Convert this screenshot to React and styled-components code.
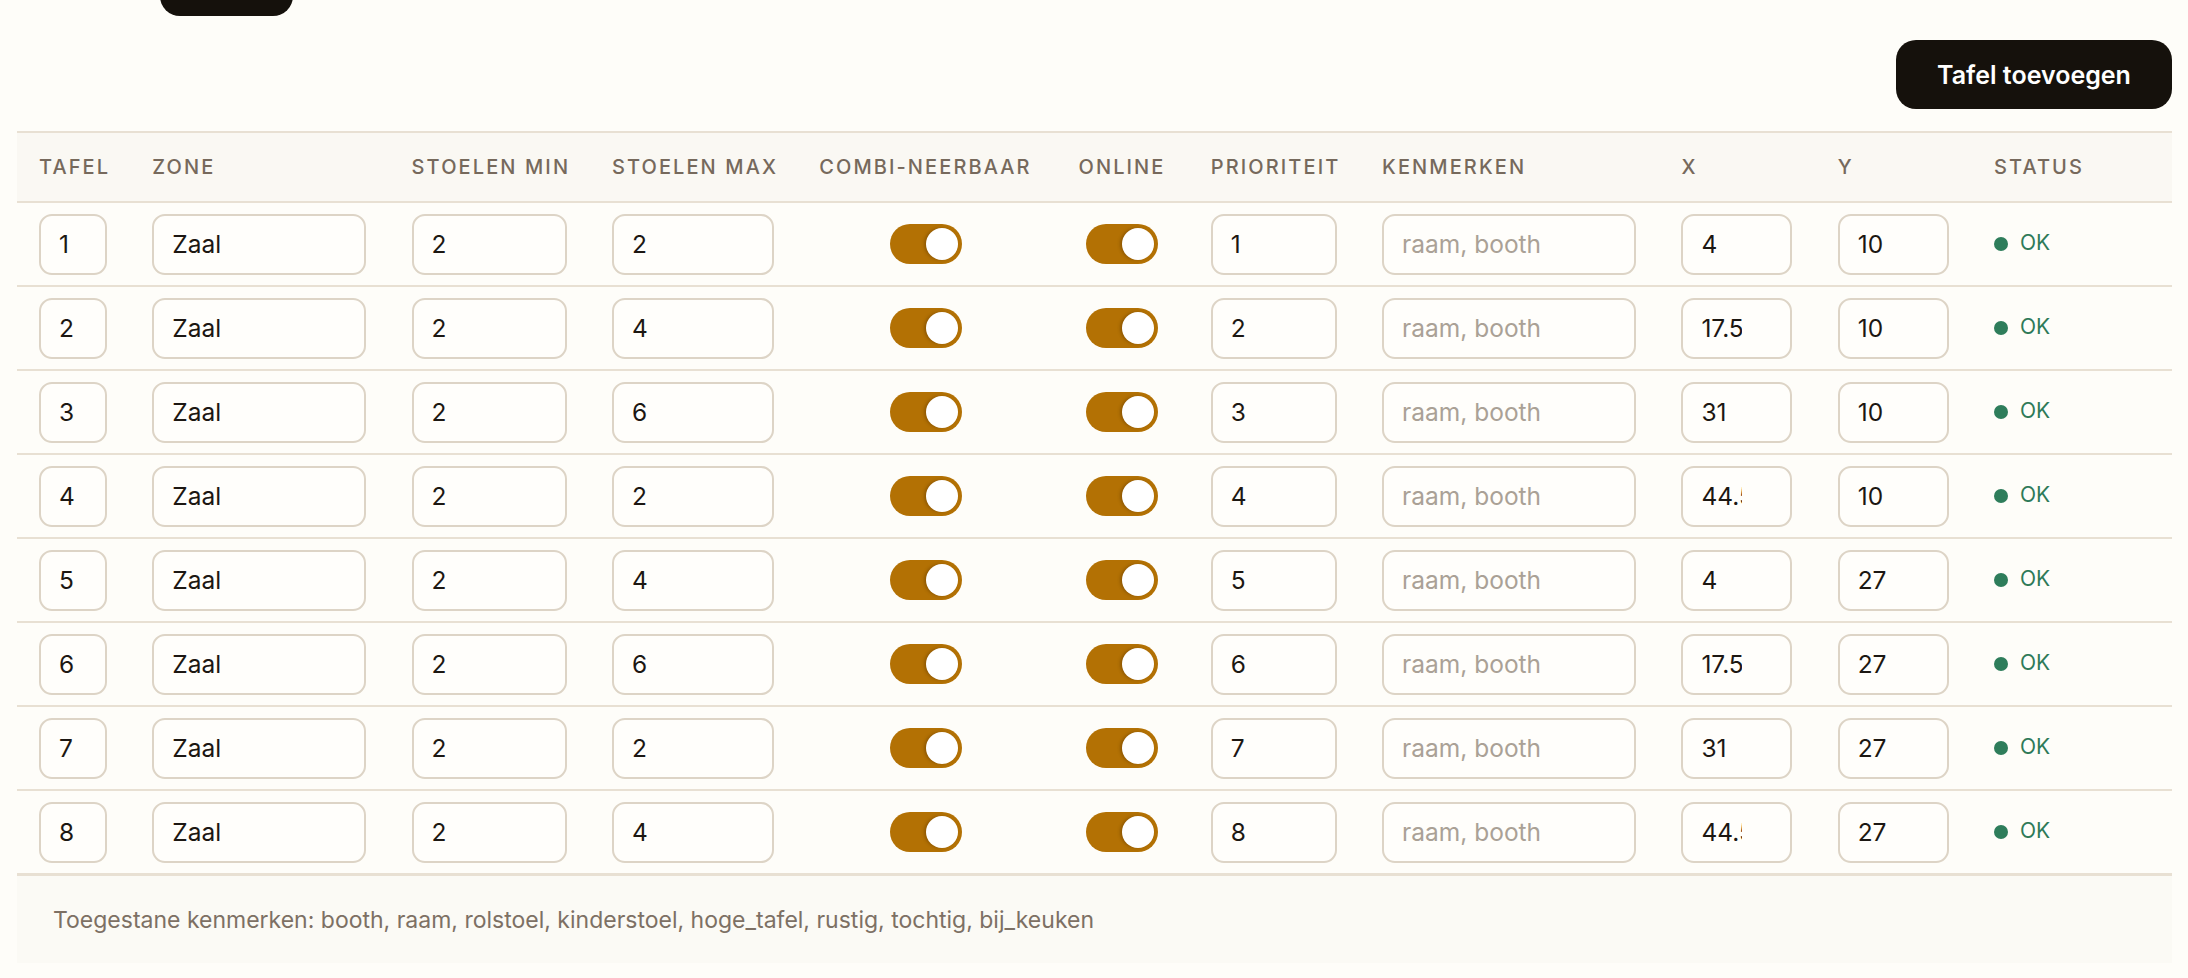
import React from "react";
import styled, { createGlobalStyle } from "styled-components";

const GlobalStyle = createGlobalStyle`
    body {
        margin: 0;
        background: #fefdf9;
        font-family: Inter, "Liberation Sans", sans-serif;
        color: #1c1712;
    }
`;

const Page = styled.div`
    padding: 0 16px 0 17px;
    min-height: 978px;
    box-sizing: border-box;
    overflow: hidden;
`;

const TopStrip = styled.div`
    margin-top: -53px;
    padding-left: 143px;
    display: flex;
`;

const DarkTab = styled.button`
    width: 133px;
    height: 69px;
    border: none;
    border-radius: 20px;
    background: #15110c;
`;

const Toolbar = styled.div`
    display: flex;
    justify-content: flex-end;
    margin-top: 24px;
`;

const AddButton = styled.button`
    width: 276px;
    height: 69px;
    border: none;
    border-radius: 20px;
    background: #15110c;
    color: #ffffff;
    font-family: Inter, "Liberation Sans", sans-serif;
    font-size: 25px;
    font-weight: 600;
    cursor: pointer;
`;

const Table = styled.div`
    margin-top: 22px;
    border-top: 2px solid #e8e0d3;
`;

const Row = styled.div`
    display: grid;
    grid-template-columns: 68px 214px 155px 162px 214px 87px 126px 254px 111px 111px 1fr;
    column-gap: 45.3px;
    padding: 0 22px;
    align-items: center;
    height: ${(p) => (p.$header ? "68px" : "82px")};
    background: ${(p) => (p.$header ? "#faf8f3" : "transparent")};
    border-bottom: ${(p) => (p.$last ? "3px" : "2px")} solid #e8e0d3;
`;

const HeadCell = styled.div`
    font-size: 20px;
    font-weight: 500;
    letter-spacing: 0.105em;
    text-transform: uppercase;
    color: #76695c;
    white-space: nowrap;
`;

const Cell = styled.div`
    display: flex;
    align-items: center;
    justify-content: ${(p) => (p.$center ? "center" : "flex-start")};
`;

const Field = styled.input`
    width: 100%;
    height: 61px;
    box-sizing: border-box;
    border: 2px solid #ddd4c6;
    border-radius: 13px;
    background: #fffefb;
    padding: 0 ${(p) => (p.$narrow ? "48px" : "16px")} 0 18px;
    font-family: Inter, "Liberation Sans", sans-serif;
    font-size: 24.5px;
    color: #1c1712;
    outline: none;

    &::placeholder {
        color: #aaa196;
    }
`;

const Track = styled.div`
    width: 72px;
    height: 40px;
    border-radius: 20px;
    background: #b37104;
    display: flex;
    align-items: center;
    justify-content: flex-end;
    padding: 0 4px;
    box-sizing: border-box;
`;

const Knob = styled.div`
    width: 32px;
    height: 32px;
    border-radius: 50%;
    background: #ffffff;
    box-shadow: -2px 0 3px rgba(80, 45, 0, 0.35);
`;

const Status = styled.div`
    display: flex;
    align-items: center;
    gap: 12px;
    color: #2e7a58;
    font-size: 21px;
    margin-top: -3px;
`;

const Dot = styled.span`
    width: 14px;
    height: 14px;
    border-radius: 50%;
    background: #2e7d5b;
    margin-top: 3px;
`;

const Footer = styled.div`
    background: #fbfaf5;
    height: 87px;
    padding-left: 36px;
    display: flex;
    align-items: center;
    font-size: 23px;
    color: #7d7064;
`;

const Toggle = () => (
    <Track>
        <Knob />
    </Track>
);

const headers = ["Tafel", "Zone", "Stoelen min", "Stoelen max", "Combi-neerbaar", "Online", "Prioriteit", "Kenmerken", "X", "Y", "Status"];

const tables = [
    { nr: 1, min: 2, max: 2, x: "4", y: "10" },
    { nr: 2, min: 2, max: 4, x: "17.5", y: "10" },
    { nr: 3, min: 2, max: 6, x: "31", y: "10" },
    { nr: 4, min: 2, max: 2, x: "44.5", y: "10" },
    { nr: 5, min: 2, max: 4, x: "4", y: "27" },
    { nr: 6, min: 2, max: 6, x: "17.5", y: "27" },
    { nr: 7, min: 2, max: 2, x: "31", y: "27" },
    { nr: 8, min: 2, max: 4, x: "44.5", y: "27" },
];

const App = () => (
    <Page>
        <GlobalStyle />
        <TopStrip>
            <DarkTab />
        </TopStrip>
        <Toolbar>
            <AddButton>Tafel toevoegen</AddButton>
        </Toolbar>
        <Table>
            <Row $header>
                {headers.map((h) => (
                    <HeadCell key={h}>{h}</HeadCell>
                ))}
            </Row>
            {tables.map((t, i) => (
                <Row key={t.nr} $last={i === tables.length - 1}>
                    <Cell><Field defaultValue={t.nr} /></Cell>
                    <Cell><Field defaultValue="Zaal" /></Cell>
                    <Cell><Field defaultValue={t.min} /></Cell>
                    <Cell><Field defaultValue={t.max} /></Cell>
                    <Cell $center><Toggle /></Cell>
                    <Cell $center><Toggle /></Cell>
                    <Cell><Field defaultValue={t.nr} /></Cell>
                    <Cell><Field placeholder="raam, booth" /></Cell>
                    <Cell><Field $narrow defaultValue={t.x} /></Cell>
                    <Cell><Field $narrow defaultValue={t.y} /></Cell>
                    <Cell>
                        <Status>
                            <Dot />
                            OK
                        </Status>
                    </Cell>
                </Row>
            ))}
            <Footer>Toegestane kenmerken: booth, raam, rolstoel, kinderstoel, hoge_tafel, rustig, tochtig, bij_keuken</Footer>
        </Table>
    </Page>
);

export default App;
